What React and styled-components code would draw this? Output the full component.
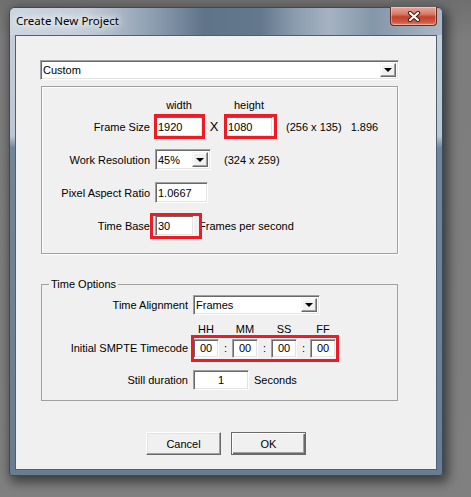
import styled, { createGlobalStyle } from "styled-components";

const GlobalStyle = createGlobalStyle`
  html, body {
    margin: 0;
    background: #7b7b7b;
  }
  body {
    font-family: "Liberation Sans", Arial, sans-serif;
    font-size: 11px;
    color: #000;
  }
`;

const Desktop = styled.div`
  width: 471px;
  height: 497px;
  box-sizing: border-box;
  padding: 7px 0 0 9px;
  background: linear-gradient(to bottom, #6f6f6f 0, #7d7d7d 40px, #808080 100%);
`;

const Window = styled.div`
  width: 434px;
  height: 469px;
  box-sizing: border-box;
  border: 1px solid #3a4b5d;
  border-radius: 6px 6px 3px 3px;
  background: linear-gradient(
    to bottom,
    #c6d0db 0,
    #bcc7d3 128px,
    #70849a 140px,
    #687c92 100%
  );
  box-shadow: 3px 4px 12px 2px rgba(0, 0, 0, 0.55);
  display: flex;
  flex-direction: column;
`;

const TitleBar = styled.div`
  height: 27px;
  display: flex;
  align-items: flex-start;
  border-radius: 5px 5px 0 0;
  background: linear-gradient(
    to right,
    #cdd6e0 0,
    #c2ccd7 18%,
    #8a9bae 34%,
    #5f7389 45%,
    #63778d 58%,
    #8b9caf 66%,
    #a5b3c1 74%,
    #8496aa 84%,
    #aab7c4 100%
  );
`;

const Title = styled.span`
  margin: 5px 0 0 6px;
  font-family: "Noto Sans", "Open Sans", sans-serif;
  font-size: 11.5px;
  line-height: 16px;
  color: #000;
  text-shadow: 0 0 6px #fff, 0 0 10px #fff, 0 0 12px #fff;
`;

const CloseButton = styled.div`
  margin: -1px 5px 0 auto;
  width: 47px;
  height: 19px;
  box-sizing: border-box;
  border: 1px solid #6b2a20;
  border-top: none;
  border-radius: 0 0 4px 4px;
  background: linear-gradient(
    to bottom,
    #e9a899 0,
    #d77a66 40%,
    #c3412b 55%,
    #cf5a43 85%,
    #e08a72 100%
  );
  box-shadow: inset 0 0 0 1px rgba(255, 255, 255, 0.35);
  display: flex;
  align-items: center;
  justify-content: center;
`;

const Client = styled.div`
  flex: 1;
  margin: 0 5px 5px;
  background: #f0f0f0;
  border: 1px solid #4c5f73;
  display: flex;
  flex-direction: column;
`;

const Content = styled.div`
  margin: 24px 0 0 24px;
  width: 358px;
`;

const Field = styled.div`
  position: relative;
  box-sizing: border-box;
  width: ${({ $w }) => $w}px;
  height: ${({ $h }) => $h || 21}px;
  background: #fff;
  border: 1px solid;
  border-color: #a0a0a0 #fff #fff #a0a0a0;
  box-shadow: inset 1px 1px 0 #696969, inset -1px -1px 0 #e3e3e3;
  display: flex;
  align-items: center;
  justify-content: ${({ $center }) => ($center ? "center" : "flex-start")};
  padding-left: ${({ $center }) => ($center ? 0 : 2)}px;
  white-space: nowrap;
`;

const DropButton = styled.span`
  position: absolute;
  right: 2px;
  top: 2px;
  bottom: 2px;
  width: 16px;
  box-sizing: border-box;
  background: #f0f0f0;
  border: 1px solid;
  border-color: #f4f4f4 #696969 #696969 #f4f4f4;
  box-shadow: inset -1px -1px 0 #a0a0a0, inset 1px 1px 0 #fff;
  display: flex;
  align-items: center;
  justify-content: center;

  &::after {
    content: "";
    border-left: 4px solid transparent;
    border-right: 4px solid transparent;
    border-top: 4px solid #000;
  }
`;

const Highlight = styled.span`
  position: relative;
  display: inline-flex;
  align-items: center;

  &::after {
    content: "";
    position: absolute;
    inset: ${({ $inset }) => $inset};
    border: 3px solid #ed1c24;
    z-index: 1;
    pointer-events: none;
  }
`;

const Group = styled.div`
  margin: 6px 0 0 1px;
  width: 357px;
  height: 168px;
  box-sizing: border-box;
  border: 1px solid #a0a0a0;
  box-shadow: 1px 1px 0 #fff, inset 1px 1px 0 #fff;
  padding-top: 12px;
`;

const FieldSet = styled.fieldset`
  margin: 24px 0 0 1px;
  width: 357px;
  box-sizing: border-box;
  padding: 0 0 10px;
  border: 1px solid #a0a0a0;
  min-width: 0;
`;

const Legend = styled.legend`
  margin-left: 7px;
  padding: 0 2px;
  font-size: 11px;
  line-height: 12px;
`;

const Row = styled.div`
  display: flex;
  align-items: center;
  height: ${({ $h }) => $h}px;
  margin-top: ${({ $mt }) => $mt || 0}px;
  white-space: nowrap;
`;

const Label = styled.span`
  flex-shrink: 0;
  width: ${({ $w }) => $w}px;
  margin-right: 5px;
  text-align: right;
`;

const Caption = styled.span`
  width: ${({ $w }) => $w}px;
  text-align: center;
`;

const Sep = styled.span`
  width: ${({ $w }) => $w}px;
  text-align: center;
  font-size: ${({ $big }) => ($big ? 13 : 11)}px;
`;

const Note = styled.span`
  margin-left: ${({ $ml }) => $ml}px;
`;

const Timecode = styled.div`
  display: flex;
  align-items: center;
`;

const ButtonRow = styled.div`
  margin-top: 31px;
  display: flex;
  justify-content: center;
  gap: 10px;
`;

const Button = styled.button`
  width: 75px;
  height: 23px;
  box-sizing: border-box;
  padding: 0;
  font-family: "Liberation Sans", Arial, sans-serif;
  font-size: 11px;
  color: #000;
  background: #f0f0f0;
  border: 1px solid;
  border-color: ${({ $default }) =>
    $default ? "#696969" : "#fff #696969 #696969 #fff"};
  box-shadow: ${({ $default }) =>
    $default
      ? "inset 1px 1px 0 #fff, inset -1px -1px 0 #696969, inset -2px -2px 0 #a0a0a0"
      : "inset -1px -1px 0 #a0a0a0, inset 1px 1px 0 #e3e3e3"};
`;

const CloseIcon = () => (
  <svg width="14" height="11" viewBox="0 0 14 11">
    <path d="M3 2 L11 9 M11 2 L3 9" stroke="#3b1f1a" strokeWidth="4.2" strokeLinecap="round" />
    <path d="M3 2 L11 9 M11 2 L3 9" stroke="#fff" strokeWidth="2.2" strokeLinecap="round" />
  </svg>
);

const timeParts = ["HH", "MM", "SS", "FF"];

export default function App() {
  return (
    <Desktop>
      <GlobalStyle />
      <Window>
        <TitleBar>
          <Title>Create New Project</Title>
          <CloseButton>
            <CloseIcon />
          </CloseButton>
        </TitleBar>
        <Client>
          <Content>
            <Field $w={359} $h={20}>
              Custom
              <DropButton />
            </Field>

            <Group>
              <Row $h={12}>
                <Label $w={108} />
                <Caption $w={48}>width</Caption>
                <Sep $w={22} />
                <Caption $w={48}>height</Caption>
              </Row>
              <Row $h={23} $mt={4}>
                <Label $w={108}>Frame Size</Label>
                <Highlight $inset="-2px -2px -2px -1px">
                  <Field $w={48}>1920</Field>
                </Highlight>
                <Sep $w={22} $big>
                  X
                </Sep>
                <Highlight $inset="-2px -4px -2px -1px">
                  <Field $w={48}>1080</Field>
                </Highlight>
                <Note $ml={13}>(256 x 135)</Note>
                <Note $ml={9}>1.896</Note>
              </Row>
              <Row $h={23} $mt={10}>
                <Label $w={108}>Work Resolution</Label>
                <Field $w={56}>
                  45%
                  <DropButton />
                </Field>
                <Note $ml={13}>(324 x 259)</Note>
              </Row>
              <Row $h={23} $mt={10}>
                <Label $w={108}>Pixel Aspect Ratio</Label>
                <Field $w={53}>1.0667</Field>
              </Row>
              <Row $h={23} $mt={10}>
                <Label $w={108}>Time Base</Label>
                <Highlight $inset="-2px -8px -3px -5px">
                  <Field $w={39}>30</Field>
                </Highlight>
                <Note $ml={5}>Frames per second</Note>
              </Row>
            </Group>

            <FieldSet>
              <Legend>Time Options</Legend>
              <Row $h={20} $mt={5}>
                <Label $w={146}>Time Alignment</Label>
                <Field $w={127} $h={20}>
                  Frames
                  <DropButton />
                </Field>
              </Row>
              <Row $h={12} $mt={8}>
                <Label $w={146} />
                {timeParts.map((p, i) => (
                  <Timecode key={p}>
                    {i > 0 && <Sep $w={13} />}
                    <Caption $w={26}>{p}</Caption>
                  </Timecode>
                ))}
              </Row>
              <Row $h={20} $mt={3}>
                <Label $w={146}>Initial SMPTE Timecode</Label>
                <Highlight $inset="-4px -3px -4px -2px">
                  <Timecode>
                    {timeParts.map((p, i) => (
                      <Timecode key={p}>
                        {i > 0 && <Sep $w={13}>:</Sep>}
                        <Field $w={26} $h={19} $center>
                          00
                        </Field>
                      </Timecode>
                    ))}
                  </Timecode>
                </Highlight>
              </Row>
              <Row $h={21} $mt={11}>
                <Label $w={146}>Still duration</Label>
                <Field $w={56} $h={20} $center>
                  1
                </Field>
                <Note $ml={5}>Seconds</Note>
              </Row>
            </FieldSet>
          </Content>

          <ButtonRow>
            <Button>Cancel</Button>
            <Button $default>OK</Button>
          </ButtonRow>
        </Client>
      </Window>
    </Desktop>
  );
}
